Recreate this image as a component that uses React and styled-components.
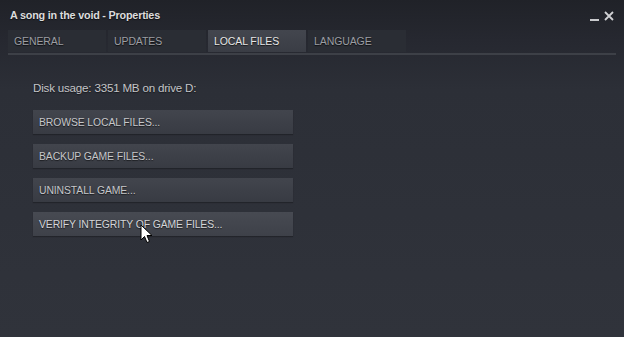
import React from 'react';
import styled, { createGlobalStyle } from 'styled-components';

const GlobalStyle = createGlobalStyle`
  html, body {
    margin: 0;
    padding: 0;
    background: #2e3139;
  }
  body {
    font-family: "Liberation Sans", Arial, sans-serif;
  }
`;

const Window = styled.div`
  position: relative;
  width: 624px;
  height: 337px;
  overflow: hidden;
  background: linear-gradient(to bottom, #202228 0px, #262830 40px, #2c2f37 90px, #30333b 337px);
  display: flex;
  flex-direction: column;
`;

const TitleBar = styled.div`
  height: 30px;
  display: flex;
  align-items: center;
  justify-content: space-between;
  padding: 0 10px 0 10px;
  box-sizing: border-box;
`;

const Title = styled.div`
  color: #dcdcdc;
  font-size: 10.8px;
  font-weight: bold;
  letter-spacing: -0.2px;
  text-shadow: 0 1px 1px rgba(0, 0, 0, 0.6);
`;

const Controls = styled.div`
  display: flex;
  align-items: center;
  gap: 5px;
  color: #c9cacd;
  padding-top: 2px;
`;

const Tabs = styled.div`
  display: flex;
  gap: 2px;
  margin: 0 8px;
  padding-bottom: 1px;
  border-bottom: 2px solid #3d4047;
`;

const Tab = styled.div`
  width: 98px;
  height: 22px;
  box-sizing: border-box;
  padding: 0 0 0 6px;
  display: flex;
  align-items: center;
  font-size: 10.5px;
  letter-spacing: -0.1px;
  color: ${p => (p.$active ? '#e6e6e6' : '#9c9ea3')};
  background: ${p => (p.$active ? 'linear-gradient(to bottom, #43464e, #3a3d45)' : '#2a2d34')};
  text-shadow: 0 1px 1px rgba(0, 0, 0, 0.7);
`;

const Content = styled.div`
  padding: 26px 0 0 33px;
  display: flex;
  flex-direction: column;
  align-items: flex-start;
`;

const DiskUsage = styled.div`
  color: #c4c5c8;
  font-size: 11.6px;
  letter-spacing: -0.2px;
  margin-bottom: 16px;
  text-shadow: 0 1px 1px rgba(0, 0, 0, 0.5);
`;

const ButtonList = styled.div`
  display: flex;
  flex-direction: column;
  gap: 10px;
`;

const ActionButton = styled.div`
  width: 260px;
  height: 24px;
  box-sizing: border-box;
  padding-left: 6px;
  display: flex;
  align-items: center;
  font-size: 10.4px;
  letter-spacing: -0.1px;
  color: ${p => (p.$hover ? '#d4d5d8' : '#c6c7ca')};
  background: ${p =>
    p.$hover
      ? 'linear-gradient(to bottom, #474a52, #3e4149)'
      : 'linear-gradient(to bottom, #42454d, #383b43)'};
  text-shadow: 0 1px 1px rgba(0, 0, 0, 0.6);
  box-shadow: 0 1px 1px rgba(0, 0, 0, 0.25);
`;

const Cursor = styled.svg`
  position: absolute;
  left: 140px;
  top: 224px;
`;

const buttons = [
  'BROWSE LOCAL FILES...',
  'BACKUP GAME FILES...',
  'UNINSTALL GAME...',
  'VERIFY INTEGRITY OF GAME FILES...',
];

export default function App() {
  return (
    <>
      <GlobalStyle />
      <Window>
        <TitleBar>
          <Title>A song in the void - Properties</Title>
          <Controls>
            <svg width="9" height="12" viewBox="0 0 9 12">
              <rect x="0" y="9" width="9" height="2" fill="#c9cacd" />
            </svg>
            <svg width="10" height="10" viewBox="0 0 10 10">
              <path d="M1 1 L9 9 M9 1 L1 9" stroke="#d0d1d4" strokeWidth="1.8" />
            </svg>
          </Controls>
        </TitleBar>
        <Tabs>
          <Tab>GENERAL</Tab>
          <Tab>UPDATES</Tab>
          <Tab $active>LOCAL FILES</Tab>
          <Tab>LANGUAGE</Tab>
        </Tabs>
        <Content>
          <DiskUsage>Disk usage: 3351 MB on drive D:</DiskUsage>
          <ButtonList>
            {buttons.map((b, i) => (
              <ActionButton key={b} $hover={i === 3}>
                {b}
              </ActionButton>
            ))}
          </ButtonList>
        </Content>
        <Cursor width="13" height="20" viewBox="0 0 13 20">
          <path
            d="M1 1 L1 16 L4.5 12.5 L7 18.5 L9.5 17.5 L7 11.5 L12 11.5 Z"
            fill="#ffffff"
            stroke="#000000"
            strokeWidth="1"
            strokeLinejoin="round"
          />
        </Cursor>
      </Window>
    </>
  );
}
